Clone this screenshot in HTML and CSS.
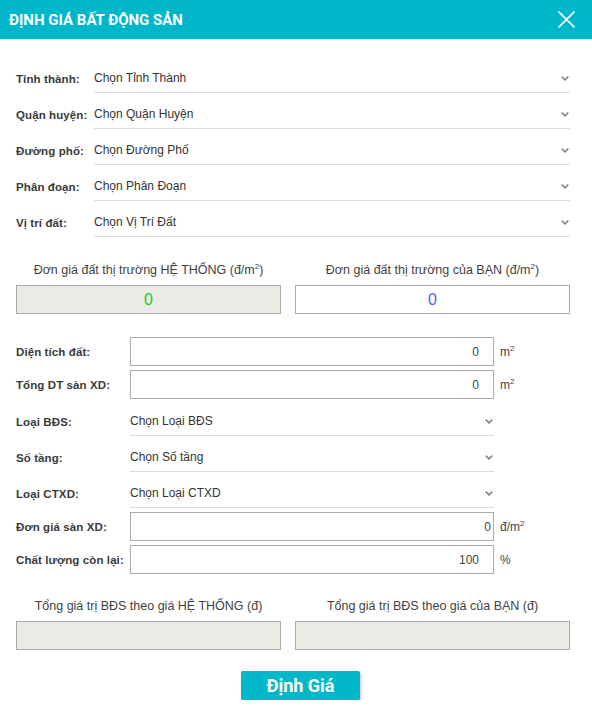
FILE: index.html
```html
<!DOCTYPE html>
<html lang="vi">
<head>
<meta charset="utf-8">
<title>Định giá bất động sản</title>
<link rel="stylesheet" href="styles.css">
</head>
<body>
<div class="dialog">
  <header class="header">
    <h1 class="title">ĐỊNH GIÁ BẤT ĐỘNG SẢN</h1>
    <svg class="close" width="17" height="17" viewBox="0 0 17 17"><path d="M0.5 0.5 L16.5 16.5 M16.5 0.5 L0.5 16.5" stroke="#fff" stroke-width="1.6" fill="none"/></svg>
  </header>

  <section class="locations">
    <div class="row"><span class="lbl">Tỉnh thành:</span><div class="select"><span>Chọn Tỉnh Thành</span><svg class="chev" width="8" height="5" viewBox="0 0 8 5"><path d="M0.7 0.7 L4 3.8 L7.3 0.7" stroke="#888" stroke-width="1.8" fill="none"/></svg></div></div>
    <div class="row"><span class="lbl">Quận huyện:</span><div class="select"><span>Chọn Quận Huyện</span><svg class="chev" width="8" height="5" viewBox="0 0 8 5"><path d="M0.7 0.7 L4 3.8 L7.3 0.7" stroke="#888" stroke-width="1.8" fill="none"/></svg></div></div>
    <div class="row"><span class="lbl">Đường phố:</span><div class="select"><span>Chọn Đường Phố</span><svg class="chev" width="8" height="5" viewBox="0 0 8 5"><path d="M0.7 0.7 L4 3.8 L7.3 0.7" stroke="#888" stroke-width="1.8" fill="none"/></svg></div></div>
    <div class="row"><span class="lbl">Phân đoạn:</span><div class="select"><span>Chọn Phân Đoạn</span><svg class="chev" width="8" height="5" viewBox="0 0 8 5"><path d="M0.7 0.7 L4 3.8 L7.3 0.7" stroke="#888" stroke-width="1.8" fill="none"/></svg></div></div>
    <div class="row"><span class="lbl">Vị trí đất:</span><div class="select"><span>Chọn Vị Trí Đất</span><svg class="chev" width="8" height="5" viewBox="0 0 8 5"><path d="M0.7 0.7 L4 3.8 L7.3 0.7" stroke="#888" stroke-width="1.8" fill="none"/></svg></div></div>
  </section>

  <section class="pair prices">
    <div class="col">
      <div class="cap">Đơn giá đất thị trường HỆ THỐNG (đ/m<sup>2</sup>)</div>
      <div class="box grey"><span class="num green">0</span></div>
    </div>
    <div class="col">
      <div class="cap">Đơn giá đất thị trường của BẠN (đ/m<sup>2</sup>)</div>
      <div class="box white"><span class="num blue">0</span></div>
    </div>
  </section>

  <section class="details">
    <div class="drow"><span class="dlbl">Diện tích đất:</span><div class="input"><span>0</span></div><span class="unit">m<sup>2</sup></span></div>
    <div class="drow"><span class="dlbl">Tổng DT sàn XD:</span><div class="input"><span>0</span></div><span class="unit">m<sup>2</sup></span></div>
    <div class="srow first"><span class="dlbl">Loại BĐS:</span><div class="select"><span>Chọn Loại BĐS</span><svg class="chev" width="8" height="5" viewBox="0 0 8 5"><path d="M0.7 0.7 L4 3.8 L7.3 0.7" stroke="#888" stroke-width="1.8" fill="none"/></svg></div></div>
    <div class="srow"><span class="dlbl">Số tầng:</span><div class="select"><span>Chọn Số tầng</span><svg class="chev" width="8" height="5" viewBox="0 0 8 5"><path d="M0.7 0.7 L4 3.8 L7.3 0.7" stroke="#888" stroke-width="1.8" fill="none"/></svg></div></div>
    <div class="srow"><span class="dlbl">Loại CTXD:</span><div class="select"><span>Chọn Loại CTXD</span><svg class="chev" width="8" height="5" viewBox="0 0 8 5"><path d="M0.7 0.7 L4 3.8 L7.3 0.7" stroke="#888" stroke-width="1.8" fill="none"/></svg></div></div>
    <div class="drow"><span class="dlbl">Đơn giá sàn XD:</span><div class="input tight"><span>0</span></div><span class="unit">đ/m<sup>2</sup></span></div>
    <div class="drow"><span class="dlbl">Chất lượng còn lại:</span><div class="input"><span>100</span></div><span class="unit">%</span></div>
  </section>

  <section class="pair totals">
    <div class="col">
      <div class="cap">Tổng giá trị BĐS theo giá HỆ THỐNG (đ)</div>
      <div class="box grey"></div>
    </div>
    <div class="col">
      <div class="cap">Tổng giá trị BĐS theo giá của BẠN (đ)</div>
      <div class="box grey"></div>
    </div>
  </section>

  <div class="actions"><button class="btn">Định Giá</button></div>
</div>
</body>
</html>
```

FILE: styles.css
```css
* { box-sizing: border-box; }
html, body { margin: 0; padding: 0; background: #fff; }
body { font-family: "Liberation Sans", Arial, sans-serif; font-size: 12px; color: #333; }

.dialog { width: 592px; }

.header {
  height: 39px;
  background: #00b6c9;
  display: flex;
  align-items: center;
  justify-content: space-between;
  padding: 0 17px 0 9px;
}
.title {
  margin: 0;
  font-family: Roboto, "Liberation Sans", sans-serif;
  font-weight: 700;
  font-size: 15px;
  color: #fff;
  letter-spacing: 0;
}
.close { display: block; }

.locations { padding: 18px 22px 0 16px; }
.row { display: flex; align-items: stretch; height: 36px; }
.lbl { width: 78px; display: flex; align-items: center; padding-top: 7px; color: #3a3a3a; font-weight: 700; font-size: 11.5px; letter-spacing: 0.1px; }
.select {
  flex: 1;
  display: flex;
  align-items: center;
  justify-content: space-between;
  border-bottom: 1px solid #dcdcdc;
  color: #333;
  padding: 7px 1px 0 0;
}
.chev { display: block; }

.pair { display: flex; gap: 14px; padding: 0 22px 0 16px; }
.col { flex: 1; display: flex; flex-direction: column; align-items: stretch; }
.col:first-child { flex: 0 0 265px; }
.cap { text-align: center; color: #3f3f3f; height: 15px; line-height: 15px; margin-bottom: 7px; font-size: 12.5px; }
.cap sup { font-size: 8px; line-height: 0; }
.box { height: 29px; border: 1px solid #ababab; display: flex; align-items: center; justify-content: center; }
.grey { background: #e9ebe4; }
.white { background: #fff; }
.num { font-size: 16px; }
.green { color: #18cc2a; }
.blue { color: #5b5bf0; }

.prices { margin-top: 26px; }

.details { padding: 23px 22px 0 16px; }
.drow { display: flex; align-items: center; height: 29px; margin-bottom: 4px; }
.dlbl { width: 114px; color: #3a3a3a; flex: 0 0 114px; font-weight: 700; font-size: 11.5px; letter-spacing: 0.1px; }
.input {
  width: 364px;
  height: 29px;
  border: 1px solid #ababab;
  display: flex;
  align-items: center;
  justify-content: flex-end;
  padding-right: 14px;
  color: #444;
}
.input.tight { padding-right: 2px; }
.unit { margin-left: 6px; color: #444; }
.unit sup { font-size: 8px; line-height: 0; }
.srow { display: flex; height: 36px; margin-bottom: 4px; margin-top: -4px; }
.srow.first { margin-top: -3px; }
.srow .dlbl { display: flex; align-items: center; padding-top: 7px; }
.srow .select { flex: 0 0 364px; }

.totals { margin-top: 25px; }

.actions { display: flex; justify-content: center; padding: 21px 0 0 9px; }
.btn {
  width: 119px;
  height: 29px;
  border: 0;
  border-radius: 2px;
  background: #00b8c8;
  color: #fff;
  font-family: Roboto, "Liberation Sans", sans-serif;
  font-weight: 700;
  font-size: 18px;
  box-shadow: 1px 2px 3px rgba(0,0,0,0.25);
  padding: 0;
}
```
